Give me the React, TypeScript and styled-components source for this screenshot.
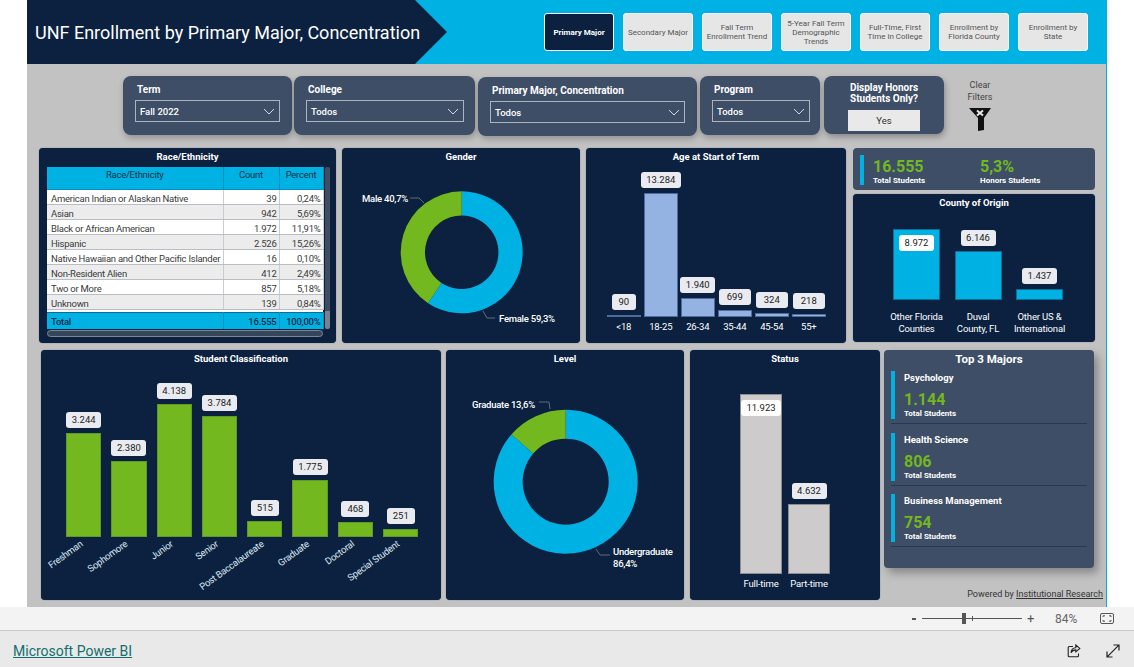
import React from 'react';
import styled, { createGlobalStyle } from 'styled-components';

const navy = '#0b213f';
const slate = '#3e4e66';
const cyan = '#00b1e4';
const green = '#72b81e';

const GlobalStyle = createGlobalStyle`
    html, body {
        margin: 0;
        padding: 0;
        background: #ffffff;
        font-family: Roboto, "Liberation Sans", sans-serif;
    }
`;

type BarDatum = {
    label: React.ReactNode;
    value: string;
    height: number;
    inside?: boolean;
    tagWidth?: number;
};

const navItems = [
    { label: 'Primary Major', active: true },
    { label: 'Secondary Major' },
    { label: 'Fall Term\nEnrollment Trend' },
    { label: '5-Year Fall Term\nDemographic\nTrends' },
    { label: 'Full-Time, First\nTime in College' },
    { label: 'Enrollment by\nFlorida County' },
    { label: 'Enrollment by\nState' },
];

const raceRows = [
    ['American Indian or Alaskan Native', '39', '0,24%'],
    ['Asian', '942', '5,69%'],
    ['Black or African American', '1.972', '11,91%'],
    ['Hispanic', '2.526', '15,26%'],
    ['Native Hawaiian and Other Pacific Islander', '16', '0,10%'],
    ['Non-Resident Alien', '412', '2,49%'],
    ['Two or More', '857', '5,18%'],
    ['Unknown', '139', '0,84%'],
];

const ageBars: BarDatum[] = [
    { label: '<18', value: '90', height: 1, tagWidth: 24 },
    { label: '18-25', value: '13.284', height: 124, tagWidth: 40 },
    { label: '26-34', value: '1.940', height: 19, tagWidth: 35 },
    { label: '35-44', value: '699', height: 7, tagWidth: 32 },
    { label: '45-54', value: '324', height: 4, tagWidth: 32 },
    { label: '55+', value: '218', height: 3, tagWidth: 32 },
];

const countyBars: BarDatum[] = [
    { label: 'Other Florida\nCounties', value: '8.972', height: 71, inside: true },
    { label: 'Duval\nCounty, FL', value: '6.146', height: 49 },
    { label: 'Other US &\nInternational', value: '1.437', height: 11 },
];

const classBars: BarDatum[] = [
    { label: 'Freshman', value: '3.244', height: 104 },
    { label: 'Sophomore', value: '2.380', height: 76 },
    { label: 'Junior', value: '4.138', height: 133 },
    { label: 'Senior', value: '3.784', height: 121 },
    { label: 'Post Baccalaureate', value: '515', height: 16, tagWidth: 28 },
    { label: 'Graduate', value: '1.775', height: 57 },
    { label: 'Doctoral', value: '468', height: 15, tagWidth: 28 },
    { label: 'Special Student', value: '251', height: 8, tagWidth: 28 },
];

const statusBars: BarDatum[] = [
    { label: 'Full-time', value: '11.923', height: 180, inside: true, tagWidth: 40 },
    { label: 'Part-time', value: '4.632', height: 70 },
];

const topMajors = [
    { name: 'Psychology', total: '1.144' },
    { name: 'Health Science', total: '806' },
    { name: 'Business Management', total: '754' },
];

const ChevronIcon = () => (
    <svg width='12' height='7' viewBox='0 0 12 7' fill='none' stroke='#d5dae2' strokeWidth='1'>
        <path d='M1 1l5 5 5-5' />
    </svg>
);

const FunnelIcon = () => (
    <svg width='22' height='23' viewBox='0 0 22 23'>
        <path d='M0 0h22l-7 10v12l-6 1v-13z' fill='#111' />
        <path d='M8 2.5l6 5M14 2.5l-6 5' stroke='#e8e8e8' strokeWidth='2' fill='none' />
    </svg>
);

const FitIcon = () => (
    <svg width='14' height='11' viewBox='0 0 14 11' fill='none' stroke='#555'>
        <rect x='0.5' y='0.5' width='13' height='10' rx='1.5' />
        <path d='M3 4V2.8h2M9 2.8h2V4M3 7v1.2h2M9 8.2h2V7' />
    </svg>
);

const ShareIcon = () => (
    <svg width='14' height='14' viewBox='0 0 14 14' fill='none' stroke='#222' strokeWidth='1.1'>
        <path d='M6 2.5H2.2a1 1 0 0 0-1 1v8.3a1 1 0 0 0 1 1h8.3a1 1 0 0 0 1-1V9.5' />
        <path d='M8.8 1l4 3.4-4 3.4V5.9c-2.4 0-3.8.9-4.8 2.9.2-3 1.8-5 4.8-5.1z' />
    </svg>
);

const ExpandIcon = () => (
    <svg width='14' height='14' viewBox='0 0 14 14' fill='none' stroke='#222' strokeWidth='1.2'>
        <path d='M1.2 12.8L12.8 1.2M7.5 1h5.5v5.5M1 7.5V13h5.5' />
    </svg>
);

// one ring slice, angles in degrees going clockwise from the top
const ringSlice = (cx: number, cy: number, outer: number, inner: number, from: number, to: number) => {
    const point = (r: number, deg: number) => {
        const rad = ((deg - 90) * Math.PI) / 180;
        return `${(cx + r * Math.cos(rad)).toFixed(2)} ${(cy + r * Math.sin(rad)).toFixed(2)}`;
    };
    const large = to - from > 180 ? 1 : 0;
    return `M${point(outer, from)}A${outer} ${outer} 0 ${large} 1 ${point(outer, to)}L${point(inner, to)}A${inner} ${inner} 0 ${large} 0 ${point(inner, from)}Z`;
};

const BarChart: React.FunctionComponent<{
    bars: BarDatum[];
    color: string;
    edge: string;
    slot: number;
    gap: number;
    plot: number;
    tagWidth: number;
    axisTop?: number;
    rotated?: boolean;
}> = ({ bars, color, edge, slot, gap, plot, tagWidth, axisTop, rotated }) => (
    <>
        <Plot $height={plot} $gap={gap}>
            {bars.map((bar) => (
                <BarSlot key={bar.value} $width={slot}>
                    {!bar.inside && <ValueTag $width={bar.tagWidth ?? tagWidth}>{bar.value}</ValueTag>}
                    <Bar $height={bar.height} $color={color} $edge={edge}>
                        {bar.inside && <ValueTag $width={bar.tagWidth ?? tagWidth} $inside>{bar.value}</ValueTag>}
                    </Bar>
                </BarSlot>
            ))}
        </Plot>
        <AxisRow $gap={gap} $top={axisTop ?? 4}>
            {bars.map((bar) =>
                rotated ? (
                    <RotatedSlot key={bar.value} $width={slot}>
                        <RotatedLabel>{bar.label}</RotatedLabel>
                    </RotatedSlot>
                ) : (
                    <AxisLabel key={bar.value} $width={slot}>
                        {bar.label}
                    </AxisLabel>
                )
            )}
        </AxisRow>
    </>
);

const App = () => {
    return (
        <Page>
            <GlobalStyle />
            <Report>
                <Header>
                    <TitleArrow>UNF Enrollment by Primary Major, Concentration</TitleArrow>
                    <Nav>
                        {navItems.map((item) => (
                            <NavButton key={item.label} $active={item.active}>
                                {item.label}
                            </NavButton>
                        ))}
                    </Nav>
                </Header>

                <Filters>
                    <FilterCard $width={169}>
                        <FilterLabel>Term</FilterLabel>
                        <Dropdown $width={145}>
                            Fall 2022 <ChevronIcon />
                        </Dropdown>
                    </FilterCard>
                    <FilterCard $width={181} $left={2}>
                        <FilterLabel>College</FilterLabel>
                        <Dropdown $width={158}>
                            Todos <ChevronIcon />
                        </Dropdown>
                    </FilterCard>
                    <FilterCard $width={219} $left={3} $drop={1}>
                        <FilterLabel>Primary Major, Concentration</FilterLabel>
                        <Dropdown $width={195}>
                            Todos <ChevronIcon />
                        </Dropdown>
                    </FilterCard>
                    <FilterCard $width={120} $left={3}>
                        <FilterLabel>Program</FilterLabel>
                        <Dropdown $width={98}>
                            Todos <ChevronIcon />
                        </Dropdown>
                    </FilterCard>
                    <HonorsCard>
                        <HonorsLabel>
                            Display Honors
                            <br />
                            Students Only?
                        </HonorsLabel>
                        <YesButton>Yes</YesButton>
                    </HonorsCard>
                    <ClearFilters>
                        <span>
                            Clear
                            <br />
                            Filters
                        </span>
                        <FunnelIcon />
                    </ClearFilters>
                </Filters>

                <TopRow>
                    <Panel $width={297}>
                        <PanelTitle>Race/Ethnicity</PanelTitle>
                        <TableArea>
                            <Table>
                                <colgroup>
                                    <col style={{ width: 176 }} />
                                    <col style={{ width: 56 }} />
                                    <col style={{ width: 44 }} />
                                </colgroup>
                                <thead>
                                    <tr>
                                        <HeadCell>Race/Ethnicity</HeadCell>
                                        <HeadCell>Count</HeadCell>
                                        <HeadCell>Percent</HeadCell>
                                    </tr>
                                </thead>
                                <tbody>
                                    {raceRows.map((row, i) => (
                                        <tr key={row[0]}>
                                            <Cell $odd={i % 2 === 1}>{row[0]}</Cell>
                                            <Cell $odd={i % 2 === 1} $right>{row[1]}</Cell>
                                            <Cell $odd={i % 2 === 1} $right>{row[2]}</Cell>
                                        </tr>
                                    ))}
                                    <tr>
                                        <SpacerCell colSpan={3} />
                                    </tr>
                                    <tr>
                                        <TotalCell>Total</TotalCell>
                                        <TotalCell $right>16.555</TotalCell>
                                        <TotalCell $right>100,00%</TotalCell>
                                    </tr>
                                </tbody>
                            </Table>
                            <VerticalScroll />
                        </TableArea>
                        <HorizontalScroll />
                    </Panel>

                    <Panel $width={238} $left={6}>
                        <PanelTitle>Gender</PanelTitle>
                        <DonutSvg width='238' height='176' viewBox='342 166 238 176'>
                            <path d={ringSlice(461.7, 252.3, 61, 36.7, 0, 213.5)} fill={cyan} />
                            <path d={ringSlice(461.7, 252.3, 61, 36.7, 213.5, 360)} fill={green} />
                            <path d='M410 198h9l5 5' fill='none' stroke='#5d6b80' />
                            <path d='M483 311l4 7h8' fill='none' stroke='#5d6b80' />
                            <DonutText x='362' y='201.5'>Male 40,7%</DonutText>
                            <DonutText x='499' y='321.5'>Female 59,3%</DonutText>
                        </DonutSvg>
                    </Panel>

                    <Panel $width={260} $left={6}>
                        <PanelTitle>Age at Start of Term</PanelTitle>
                        <ChartBody $left={21}>
                            <BarChart
                                bars={ageBars}
                                color='#94b2e2'
                                edge='#4e6d9c'
                                slot={33.5}
                                gap={3.5}
                                plot={151}
                                tagWidth={32}
                            />
                        </ChartBody>
                    </Panel>

                    <SideColumn>
                        <KpiCard>
                            <Accent $height={30} />
                            <KpiItem $width={98}>
                                <KpiValue>16.555</KpiValue>
                                <KpiCaption>Total Students</KpiCaption>
                            </KpiItem>
                            <KpiItem>
                                <KpiValue>5,3%</KpiValue>
                                <KpiCaption>Honors Students</KpiCaption>
                            </KpiItem>
                        </KpiCard>
                        <Panel $width={242} $height={148}>
                            <PanelTitle>County of Origin</PanelTitle>
                            <ChartBody $left={40}>
                                <BarChart
                                    bars={countyBars}
                                    color={cyan}
                                    edge='#0a6f96'
                                    slot={47}
                                    gap={14.5}
                                    plot={88}
                                    tagWidth={35}
                                    axisTop={11}
                                />
                            </ChartBody>
                        </Panel>
                    </SideColumn>
                </TopRow>

                <BottomRow>
                    <Panel $width={400} $height={250}>
                        <PanelTitle>Student Classification</PanelTitle>
                        <ChartBody $left={25}>
                            <BarChart
                                bars={classBars}
                                color={green}
                                edge='#5f9a28'
                                slot={35.3}
                                gap={10}
                                plot={169}
                                tagWidth={35}
                                axisTop={0}
                                rotated
                            />
                        </ChartBody>
                    </Panel>

                    <Panel $width={238} $height={250} $left={5}>
                        <PanelTitle>Level</PanelTitle>
                        <DonutSvg width='238' height='232' viewBox='446 368 238 232'>
                            <path d={ringSlice(565.7, 481.7, 72, 43, 0, 311)} fill={cyan} />
                            <path d={ringSlice(565.7, 481.7, 72, 43, 311, 360)} fill={green} />
                            <path d='M539 402h10l1 7' fill='none' stroke='#5d6b80' />
                            <path d='M596 549l4 6h10' fill='none' stroke='#5d6b80' />
                            <DonutText x='472' y='407.5'>Graduate 13,6%</DonutText>
                            <DonutText x='613' y='554.5'>Undergraduate</DonutText>
                            <DonutText x='613' y='566.5'>86,4%</DonutText>
                        </DonutSvg>
                    </Panel>

                    <Panel $width={190} $height={250} $left={6}>
                        <PanelTitle>Status</PanelTitle>
                        <ChartBody $left={50}>
                            <BarChart
                                bars={statusBars}
                                color='#cdcbcb'
                                edge='#8d8d8f'
                                slot={42}
                                gap={6}
                                plot={206}
                                tagWidth={35}
                            />
                        </ChartBody>
                    </Panel>

                    <TopColumn>
                        <TopMajors>
                            <TopTitle>Top 3 Majors</TopTitle>
                            {topMajors.map((major) => (
                                <MajorRow key={major.name}>
                                    <Accent $height={48} />
                                    <MajorText>
                                        <MajorName>{major.name}</MajorName>
                                        <KpiValue>{major.total}</KpiValue>
                                        <KpiCaption>Total Students</KpiCaption>
                                    </MajorText>
                                </MajorRow>
                            ))}
                        </TopMajors>
                        <PoweredBy>
                            Powered by <u>Institutional Research</u>
                        </PoweredBy>
                    </TopColumn>
                </BottomRow>
            </Report>

            <ZoomBar>
                <ZoomMinus />
                <ZoomTrack>
                    <ZoomThumb />
                    <ZoomTick />
                </ZoomTrack>
                <ZoomPlus>+</ZoomPlus>
                <ZoomValue>84%</ZoomValue>
                <FitIcon />
            </ZoomBar>
            <BrandBar>
                <BrandLink href='#'>Microsoft Power BI</BrandLink>
                <BrandIcons>
                    <ShareIcon />
                    <ExpandIcon />
                </BrandIcons>
            </BrandBar>
        </Page>
    );
};

export default App;

const Page = styled.div`
    width: 1134px;
    height: 667px;
    overflow: hidden;
    display: flex;
    flex-direction: column;
    background: #ffffff;
`;

const Report = styled.main`
    width: 1079px;
    height: 607px;
    flex: none;
    margin-left: 27px;
    background: #c2c2c2;
    border-right: 1px solid ${cyan};
    box-sizing: content-box;
    display: flex;
    flex-direction: column;
`;

const Header = styled.header`
    height: 64px;
    flex: none;
    background: ${cyan};
    display: flex;
`;

const TitleArrow = styled.h1`
    width: 420px;
    flex: none;
    box-sizing: border-box;
    margin: 0;
    padding-left: 8px;
    background: ${navy};
    clip-path: polygon(0 0, 388px 0, 100% 50%, 388px 100%, 0 100%);
    color: #ffffff;
    font-size: 18px;
    font-weight: 400;
    line-height: 66px;
    white-space: nowrap;
`;

const Nav = styled.nav`
    display: flex;
    gap: 9px;
    margin-left: 97px;
    padding-top: 13px;
`;

const NavButton = styled.div<{ $active?: boolean }>`
    width: 70px;
    height: 38px;
    flex: none;
    box-sizing: border-box;
    border: 1.5px solid #ffffff;
    border-radius: 3px;
    display: flex;
    align-items: center;
    justify-content: center;
    text-align: center;
    white-space: pre-line;
    font-size: 8px;
    line-height: 9px;
    background: ${({ $active }) => ($active ? navy : '#e6e6e6')};
    color: ${({ $active }) => ($active ? '#ffffff' : '#555555')};
    font-weight: ${({ $active }) => ($active ? 700 : 400)};
`;

const Filters = styled.section`
    height: 84px;
    flex: none;
    padding: 12px 0 0 96px;
    box-sizing: border-box;
    display: flex;
    align-items: flex-start;
`;

const FilterCard = styled.div<{ $width: number; $left?: number; $drop?: number }>`
    width: ${({ $width }) => $width}px;
    height: 59px;
    box-sizing: border-box;
    margin-left: ${({ $left }) => $left ?? 0}px;
    margin-top: ${({ $drop }) => $drop ?? 0}px;
    padding: 8px 0 0 12px;
    background: ${slate};
    border-radius: 8px;
    box-shadow: 1px 3px 6px rgba(0, 0, 0, 0.25);
`;

const FilterLabel = styled.div`
    color: #ffffff;
    font-size: 10px;
    font-weight: 700;
    line-height: 12px;
    margin: 0 0 4px 2px;
`;

const Dropdown = styled.div<{ $width: number }>`
    width: ${({ $width }) => $width}px;
    height: 22px;
    box-sizing: border-box;
    border: 1px solid #aeb4bd;
    padding: 1px 4px 0;
    display: flex;
    align-items: center;
    justify-content: space-between;
    color: #ffffff;
    font-size: 9.5px;
    font-weight: 500;
`;

const HonorsCard = styled.div`
    width: 120px;
    height: 58px;
    margin-left: 4px;
    box-sizing: border-box;
    padding-top: 6px;
    background: ${slate};
    border-radius: 8px;
    box-shadow: 1px 3px 6px rgba(0, 0, 0, 0.3);
    display: flex;
    flex-direction: column;
    align-items: center;
`;

const HonorsLabel = styled.div`
    color: #ffffff;
    font-size: 10px;
    font-weight: 700;
    line-height: 11px;
    text-align: center;
`;

const YesButton = styled.div`
    width: 72px;
    height: 21px;
    margin-top: 6px;
    background: #e9e9e9;
    color: #333333;
    font-size: 9.5px;
    line-height: 21px;
    text-align: center;
`;

const ClearFilters = styled.div`
    width: 72px;
    padding-top: 3px;
    display: flex;
    flex-direction: column;
    align-items: center;
    gap: 5px;
    color: #444444;
    font-size: 9px;
    line-height: 12px;
    text-align: center;
`;

const TopRow = styled.section`
    display: flex;
    height: 195px;
    flex: none;
    margin-left: 12px;
`;

const BottomRow = styled.section`
    display: flex;
    margin: 7px 0 0 14px;
`;

const Panel = styled.div<{ $width: number; $height?: number; $left?: number }>`
    width: ${({ $width }) => $width}px;
    height: ${({ $height }) => ($height ? `${$height}px` : '100%')};
    flex: none;
    margin-left: ${({ $left }) => $left ?? 0}px;
    background: ${navy};
    border-radius: 4px;
    box-shadow: 0 0 1px rgba(40, 60, 90, 0.9);
    overflow: hidden;
`;

const PanelTitle = styled.h2`
    margin: 0;
    height: 18px;
    color: #ffffff;
    font-size: 9.5px;
    font-weight: 700;
    line-height: 18px;
    text-align: center;
`;

const TableArea = styled.div`
    display: flex;
    margin: 1px 0 0 8px;
`;

const Table = styled.table`
    width: 276px;
    flex: none;
    table-layout: fixed;
    border-collapse: collapse;
    font-size: 9.5px;
    letter-spacing: -0.25px;
    color: #3a3a3a;
`;

const HeadCell = styled.th`
    height: 22px;
    box-sizing: border-box;
    padding: 0 0 6px;
    background: ${cyan};
    border-right: 1px solid #0a8fbc;
    border-bottom: 1px solid #0a8fbc;
    color: #10323f;
    font-weight: 400;
    text-align: center;
`;

const Cell = styled.td<{ $odd?: boolean; $right?: boolean }>`
    height: 11px;
    padding: 3px 2px 0 4px;
    background: ${({ $odd }) => ($odd ? '#ececec' : '#ffffff')};
    border-bottom: 1px solid #b9bec6;
    border-right: 1px solid #c9ccd2;
    text-align: ${({ $right }) => ($right ? 'right' : 'left')};
    white-space: nowrap;
    overflow: hidden;
    line-height: 11px;
`;

const SpacerCell = styled.td`
    height: 2px;
    padding: 0;
    background: #ffffff;
`;

const TotalCell = styled.td<{ $right?: boolean }>`
    height: 14px;
    padding: 2px 2px 0 4px;
    background: ${cyan};
    border-top: 1px solid #0a6f96;
    border-right: 1px solid #0a8fbc;
    color: #0b2b44;
    font-weight: 500;
    text-align: ${({ $right }) => ($right ? 'right' : 'left')};
    white-space: nowrap;
    line-height: 14px;
`;

const VerticalScroll = styled.div`
    width: 5px;
    height: 162px;
    margin-left: 1px;
    border-radius: 2px;
    background: linear-gradient(#3d4e63 0 89%, #75838f 89% 100%);
`;

const HorizontalScroll = styled.div`
    width: 276px;
    height: 7px;
    box-sizing: border-box;
    margin: 1px 0 0 8px;
    border: 1px solid #7d8794;
    border-radius: 4px;
    background: #36465a;
`;

const DonutSvg = styled.svg`
    display: block;
`;

const DonutText = styled.text`
    fill: #ffffff;
    font-size: 9.5px;
    font-weight: 500;
    letter-spacing: -0.25px;
`;

const ChartBody = styled.div<{ $left: number }>`
    padding-left: ${({ $left }) => $left}px;
`;

const Plot = styled.div<{ $height: number; $gap: number }>`
    height: ${({ $height }) => $height}px;
    display: flex;
    align-items: flex-end;
    gap: ${({ $gap }) => $gap}px;
`;

const BarSlot = styled.div<{ $width: number }>`
    width: ${({ $width }) => $width}px;
    display: flex;
    flex-direction: column;
    align-items: center;
`;

const ValueTag = styled.div<{ $width: number; $inside?: boolean }>`
    width: ${({ $width }) => $width}px;
    height: 16px;
    flex: none;
    margin: ${({ $inside }) => ($inside ? '5px 0 0' : '0 0 5px')};
    background: ${({ $inside }) => ($inside ? '#ffffff' : '#e9ebf0')};
    border-radius: 3px;
    color: #222222;
    font-size: 9.5px;
    line-height: 16px;
    text-align: center;
`;

const Bar = styled.div<{ $height: number; $color: string; $edge: string }>`
    width: 100%;
    height: ${({ $height }) => $height}px;
    box-sizing: border-box;
    background: ${({ $color }) => $color};
    border: 1px solid ${({ $edge }) => $edge};
    display: flex;
    flex-direction: column;
    align-items: center;
`;

const AxisRow = styled.div<{ $gap: number; $top: number }>`
    display: flex;
    gap: ${({ $gap }) => $gap}px;
    margin-top: ${({ $top }) => $top}px;
`;

const AxisLabel = styled.div<{ $width: number }>`
    width: ${({ $width }) => $width}px;
    display: flex;
    justify-content: center;
    color: #ffffff;
    font-size: 9.5px;
    line-height: 12px;
    letter-spacing: -0.15px;
    text-align: center;
    white-space: pre;
    flex: none;
`;

const RotatedSlot = styled.div<{ $width: number }>`
    width: ${({ $width }) => $width}px;
    height: 12px;
    flex: none;
    display: flex;
    justify-content: flex-end;
    padding-right: 20px;
    box-sizing: border-box;
`;

const RotatedLabel = styled.div`
    flex: none;
    color: #dbe6f3;
    font-size: 9.5px;
    line-height: 12px;
    letter-spacing: -0.3px;
    white-space: nowrap;
    transform-origin: right center;
    transform: rotate(-36deg);
`;

const SideColumn = styled.div`
    width: 242px;
    margin-left: 7px;
    display: flex;
    flex-direction: column;
    gap: 4px;
`;

const KpiCard = styled.div`
    height: 42px;
    padding: 7px 0 0 7px;
    box-sizing: border-box;
    background: ${slate};
    border-radius: 4px;
    display: flex;
`;

const Accent = styled.div<{ $height: number }>`
    width: 4px;
    height: ${({ $height }) => $height}px;
    flex: none;
    background: ${cyan};
`;

const KpiItem = styled.div<{ $width?: number }>`
    margin-left: 9px;
    padding-top: 3px;
    width: ${({ $width }) => ($width ? `${$width}px` : 'auto')};
    display: flex;
    flex-direction: column;
`;

const KpiValue = styled.div`
    color: ${green};
    font-size: 16px;
    font-weight: 700;
    line-height: 18px;
`;

const KpiCaption = styled.div`
    color: #ffffff;
    font-size: 8px;
    font-weight: 700;
    line-height: 9px;
`;

const TopColumn = styled.div`
    width: 219px;
    flex: none;
    margin-left: 4px;
    display: flex;
    flex-direction: column;
`;

const TopMajors = styled.div`
    width: 210px;
    height: 218px;
    box-sizing: border-box;
    padding: 0 7px;
    background: ${slate};
    border-radius: 4px;
    box-shadow: 4px 5px 8px rgba(0, 0, 0, 0.3);
`;

const TopTitle = styled.h3`
    margin: 0 0 3px;
    height: 18px;
    color: #ffffff;
    font-size: 11.5px;
    font-weight: 700;
    line-height: 18px;
    text-align: center;
`;

const MajorRow = styled.div`
    display: flex;
    height: 53px;
    margin-bottom: 8.5px;
    border-bottom: 1.5px solid #28384f;
    box-sizing: border-box;
`;

const MajorText = styled.div`
    margin-left: 9px;
    display: flex;
    flex-direction: column;
`;

const MajorName = styled.div`
    color: #ffffff;
    font-size: 9.5px;
    font-weight: 700;
    line-height: 14px;
    margin-bottom: 6px;
`;

const PoweredBy = styled.div`
    margin-top: 20px;
    color: #333333;
    font-size: 9px;
    line-height: 12px;
    text-align: right;
    white-space: nowrap;
`;

const ZoomBar = styled.div`
    height: 24px;
    flex: none;
    padding-right: 20px;
    background: #f3f3f3;
    border-bottom: 1px solid #c9c9c9;
    box-sizing: border-box;
    display: flex;
    align-items: center;
    justify-content: flex-end;
`;

const ZoomMinus = styled.div`
    width: 4px;
    height: 2px;
    background: #555555;
`;

const ZoomTrack = styled.div`
    position: relative;
    width: 100px;
    height: 1px;
    margin-left: 6px;
    background: #555555;
`;

const ZoomThumb = styled.div`
    position: absolute;
    left: 40px;
    top: -5px;
    width: 4px;
    height: 11px;
    background: #555555;
`;

const ZoomTick = styled.div`
    position: absolute;
    left: 50px;
    top: -2px;
    width: 1px;
    height: 5px;
    background: #555555;
`;

const ZoomPlus = styled.div`
    width: 10px;
    margin-left: 5px;
    color: #555555;
    font-size: 13px;
    line-height: 13px;
`;

const ZoomValue = styled.div`
    width: 23px;
    margin: 0 22px 0 18px;
    color: #666666;
    font-size: 12px;
`;

const BrandBar = styled.footer`
    flex: 1;
    padding: 3px 14px 0 13px;
    background: #e9e9e9;
    display: flex;
    align-items: center;
    justify-content: space-between;
`;

const BrandLink = styled.a`
    color: #136e6e;
    font-size: 14px;
`;

const BrandIcons = styled.div`
    display: flex;
    gap: 25px;
`;
